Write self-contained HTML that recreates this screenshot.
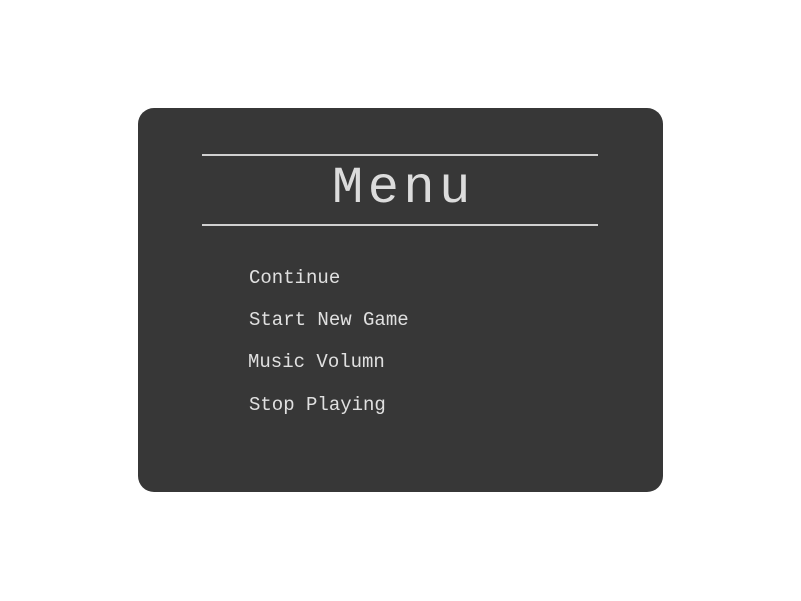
<!DOCTYPE html>
<html><head><style>
html,body{margin:0;padding:0;background:#fff;width:801px;height:601px;overflow:hidden}
.box{position:absolute;left:138px;top:108px;width:525px;height:384px;background:#373737;border-radius:16px}
.line{position:absolute;left:202px;width:396px;height:2px;background:#d0d0d0}
.t{position:absolute;font-family:"Liberation Mono",monospace;color:#e0e0e0;white-space:pre}
.title{left:332px;top:163px;font-size:52px;line-height:52px;letter-spacing:4.5px;color:#dcdcdc}
.i{left:249px;font-size:19px;line-height:20px;color:#e0e0e0}
</style></head><body>
<div class="box"></div>
<div class="line" style="top:154px"></div>
<div class="line" style="top:224px"></div>
<div class="t title">Menu</div>
<div class="t i" style="top:268px">Continue</div>
<div class="t i" style="top:310px">Start New Game</div>
<div class="t i" style="top:352px;left:248px">Music Volumn</div>
<div class="t i" style="top:395px">Stop Playing</div>
</body></html>
